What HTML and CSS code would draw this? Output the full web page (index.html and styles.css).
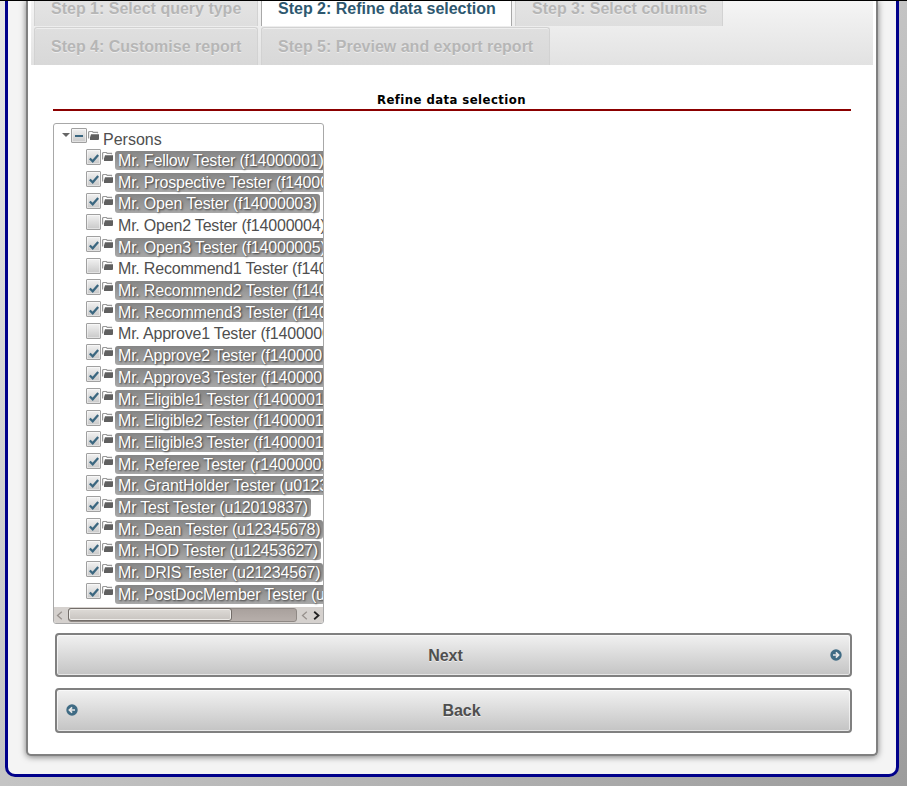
FILE: index.html
```
<!DOCTYPE html>
<html lang="en">
<head>
<meta charset="utf-8">
<title>Refine data selection</title>
<link rel="stylesheet" href="styles.css">
</head>
<body>
<svg class="defs" width="0" height="0">
  <symbol id="check" viewBox="0 0 10 9"><path d="M.8 4.5 3.7 7.3 9.2 1" fill="none" stroke="#3b6780" stroke-width="2.3"/></symbol>
  <symbol id="folder" viewBox="0 0 11 9"><path d="M.6 7.5V1.2l.7-.7h3l1 .9h4.2v.9" fill="none" stroke="#999" stroke-width="1.2"/><path d="M2 9V6.5L3 3.2h8v5L10.3 9z" fill="#606060"/></symbol>
  <symbol id="circle-arrow" viewBox="0 0 12 12"><circle cx="6" cy="6" r="5.7" fill="#3f6b84"/><path d="M3 6h5M5.9 3.3 8.6 6 5.9 8.7" fill="none" stroke="#e8e8e8" stroke-width="1.7"/></symbol>
</svg>
<div class="outer">
  <div class="panel">
    <nav class="tabs">
      <div class="tab-row first">
        <div class="tab t1">Step 1: Select query type</div>
        <div class="tab t2 active">Step 2: Refine data selection</div>
        <div class="tab t3">Step 3: Select columns</div>
      </div>
      <div class="tab-row second">
        <div class="tab t4">Step 4: Customise report</div>
        <div class="tab t5">Step 5: Preview and export report</div>
      </div>
    </nav>
    <main class="content">
      <h1 class="title"><span>Refine data selection</span></h1>
      <div class="tree">
        <div class="nodes" id="nodes">
          <div class="root"><span class="toggle"></span><span class="box"><span class="dash"></span></span><svg class="folder"><use href="#folder"/></svg><span class="root-label">Persons</span></div>
        </div>
        <div class="scrollbar">
          <svg class="arrow a1" viewBox="0 0 7 9"><path d="M5.8.8 1.5 4.5l4.3 3.7"/></svg>
          <div class="track"><div class="thumb"></div></div>
          <svg class="arrow a2" viewBox="0 0 7 9"><path d="M5.8.8 1.5 4.5l4.3 3.7"/></svg>
          <svg class="arrow a3" viewBox="0 0 7 9"><path d="M1.2.8 5.5 4.5 1.2 8.2"/></svg>
        </div>
      </div>
      <div class="button next"><span>Next</span><svg class="go"><use href="#circle-arrow"/></svg></div>
      <div class="button back"><svg class="go"><use href="#circle-arrow"/></svg><span>Back</span></div>
    </main>
  </div>
</div>
<div class="topline"></div>
<script src="tree.js"></script>
</body>
</html>
```
FILE: tree.js
```
const persons = [
  ["Mr. Fellow Tester (f14000001)", 1],
  ["Mr. Prospective Tester (f1400000", 1],
  ["Mr. Open Tester (f14000003)", 1],
  ["Mr. Open2 Tester (f14000004)", 0],
  ["Mr. Open3 Tester (f14000005)", 1],
  ["Mr. Recommend1 Tester (f1400", 0],
  ["Mr. Recommend2 Tester (f1400", 1],
  ["Mr. Recommend3 Tester (f1400", 1],
  ["Mr. Approve1 Tester (f1400000", 0],
  ["Mr. Approve2 Tester (f1400001", 1],
  ["Mr. Approve3 Tester (f1400001", 1],
  ["Mr. Eligible1 Tester (f14000012", 1],
  ["Mr. Eligible2 Tester (f14000013", 1],
  ["Mr. Eligible3 Tester (f14000014", 1],
  ["Mr. Referee Tester (r14000001", 1],
  ["Mr. GrantHolder Tester (u01234", 1],
  ["Mr Test Tester (u12019837)", 1],
  ["Mr. Dean Tester (u12345678)", 1],
  ["Mr. HOD Tester (u12453627)", 1],
  ["Mr. DRIS Tester (u21234567)", 1],
  ["Mr. PostDocMember Tester (u1", 1]
];
document.getElementById("nodes").insertAdjacentHTML("beforeend", persons.map(([name, on]) =>
  `<div class="node${on ? " on" : ""}"><span class="box">${on ? '<svg class="check"><use href="#check"/></svg>' : ""}</span><svg class="folder"><use href="#folder"/></svg><span class="label">${name}</span></div>`
).join(""));
```
FILE: styles.css
```
* { box-sizing: border-box; }
html { height: 100%; overflow: hidden; }
body {
  margin: 0;
  height: 786px;
  overflow: hidden;
  background: linear-gradient(to bottom right, #e6e6e6, #c4c4c4 50%, #9c9c9c);
  font-family: "Liberation Sans", Arial, sans-serif;
  font-size: 16px;
}
.defs { position: absolute; }
.topline { position: absolute; top: 0; left: 0; width: 907px; height: 1px; background: #000; }
.outer {
  width: 894px;
  height: 777px;
  margin-left: 5px;
  padding: 0 18px;
  border: 3px solid #00008b;
  border-top: 0;
  border-radius: 0 0 10px 10px;
  background: #f4f4f4;
}
.panel {
  width: 852px;
  height: 756px;
  padding: 0 3px;
  border: 2px solid #808080;
  border-top: 0;
  border-radius: 0 0 5px 5px;
  background: #fff;
  box-shadow: 0 1px 6px rgba(0, 0, 0, .5);
}
.tabs {
  width: 842px;
  height: 65px;
  padding-left: 3px;
  background: linear-gradient(#f5f5f5, #e2e2e2);
}
.tab-row { display: flex; gap: 3px; }
.first { height: 27px; }
.tab {
  height: 38px;
  padding: 10px 0 0 16px;
  line-height: 18px;
  border: 1px solid #d2d2d2;
  border-bottom: 0;
  border-radius: 3px 3px 0 0;
  background: linear-gradient(#dfdfdf, #d8d8d8);
  box-shadow: inset 0 1px 0 #eee;
  color: #b6b6b6;
  font-weight: bold;
  text-shadow: 0 1px 0 #eee;
  white-space: nowrap;
}
.first .tab { height: 26px; padding-top: 0; border-top: 0; border-radius: 0; box-shadow: none; background: linear-gradient(#e4e4e4, #dedede); }
.first .active { background: #fff; color: #2e5870; border-color: #a8a8a8; text-shadow: none; }
.t1, .t4 { width: 224px; }
.t2 { width: 251px; }
.t3 { width: 208px; }
.t5 { width: 289px; }
.content { padding: 27px 22px 0; }
.title {
  width: 798px;
  height: 19px;
  margin: 0;
  padding-right: 1px;
  border-bottom: 2px solid #8b0000;
  font: bold 13px/16px "DejaVu Sans Condensed", "DejaVu Sans", sans-serif;
  letter-spacing: .43px;
  text-align: center;
}
.tree {
  width: 271px;
  height: 501px;
  margin-top: 12px;
  border: 1px solid #a8a8a8;
  border-radius: 3px;
  overflow: hidden;
}
.nodes { height: 483px; overflow: hidden; }
.root { display: flex; height: 25.3px; padding: 4px 0 0 8px; color: #4f4f4f; }
.toggle { width: 0; height: 0; margin: 5px 2px 0 0; border: 4px solid transparent; border-top: 4px solid #666; border-bottom: 0; }
.root .toggle { margin-right: 1px; }
.box {
  flex: none;
  display: flex;
  align-items: center;
  justify-content: center;
  width: 15px;
  height: 16px;
  border: 1px solid #a0a0a0;
  border-radius: 1px;
  background: linear-gradient(#f1f1f1, #c9c9c9);
  box-shadow: inset 0 0 0 1px rgba(255, 255, 255, .45);
}
.root .box { width: 16px; height: 15px; }
.dash { width: 8px; height: 2px; background: #3b6780; }
.check { width: 10px; height: 9px; margin-top: 2px; }
.folder { flex: none; width: 11px; height: 9px; margin: 3px 0 0 1px; }
.root-label { margin: 3px 0 0 4px; line-height: 18px; }
.node { display: flex; height: 21.7px; padding-left: 32px; color: #4f4f4f; white-space: nowrap; }
.label { height: 19px; margin: 1.7px 0 0 2px; padding: 0 3px; border-radius: 3px; line-height: 19px; letter-spacing: -.2px; }
.on .label { background: linear-gradient(#858585, #a8a8a8); color: #fff; text-shadow: 1px 1px 2px #333; }
.scrollbar { display: flex; align-items: center; height: 16px; padding-left: 2px; background: #d5d1ce; }
.track { width: 229px; height: 14px; margin-left: 5px; border: 1px solid #8f8985; border-radius: 3px; background: linear-gradient(#a9a19d, #b7afab); }
.thumb { width: 164px; height: 13px; margin: -1px 0 0 -1px; border: 1px solid #736d69; border-radius: 3px; background: linear-gradient(#dedbd7, #c8c4c0); box-shadow: inset 0 0 0 1px #eeece9; }
.arrow { width: 7px; height: 9px; fill: none; stroke: #98928e; stroke-width: 1.3; }
.a2 { margin-left: 4px; }
.a3 { margin-left: 5px; stroke: #222; stroke-width: 1.8; }
.button {
  display: flex;
  align-items: center;
  width: 797px;
  height: 44px;
  margin: 9px 0 0 2px;
  border: 2px solid #808080;
  border-radius: 4px;
  background: linear-gradient(#f1f1f1, #c4c4c4);
  box-shadow: inset 0 0 0 1px rgba(255, 255, 255, .6);
  color: #4f4f4f;
  font-weight: bold;
  text-shadow: 0 1px 0 #eee;
}
.button span { flex: 1; text-align: center; }
.go { width: 12px; height: 12px; }
.next { padding: 0 8px 0 4px; }
.next span { padding-top: 2px; }
.back { height: 45px; margin-top: 11px; padding: 0 5px 0 9px; }
.back .go { margin-bottom: 1px; transform: scaleX(-1); }
```
